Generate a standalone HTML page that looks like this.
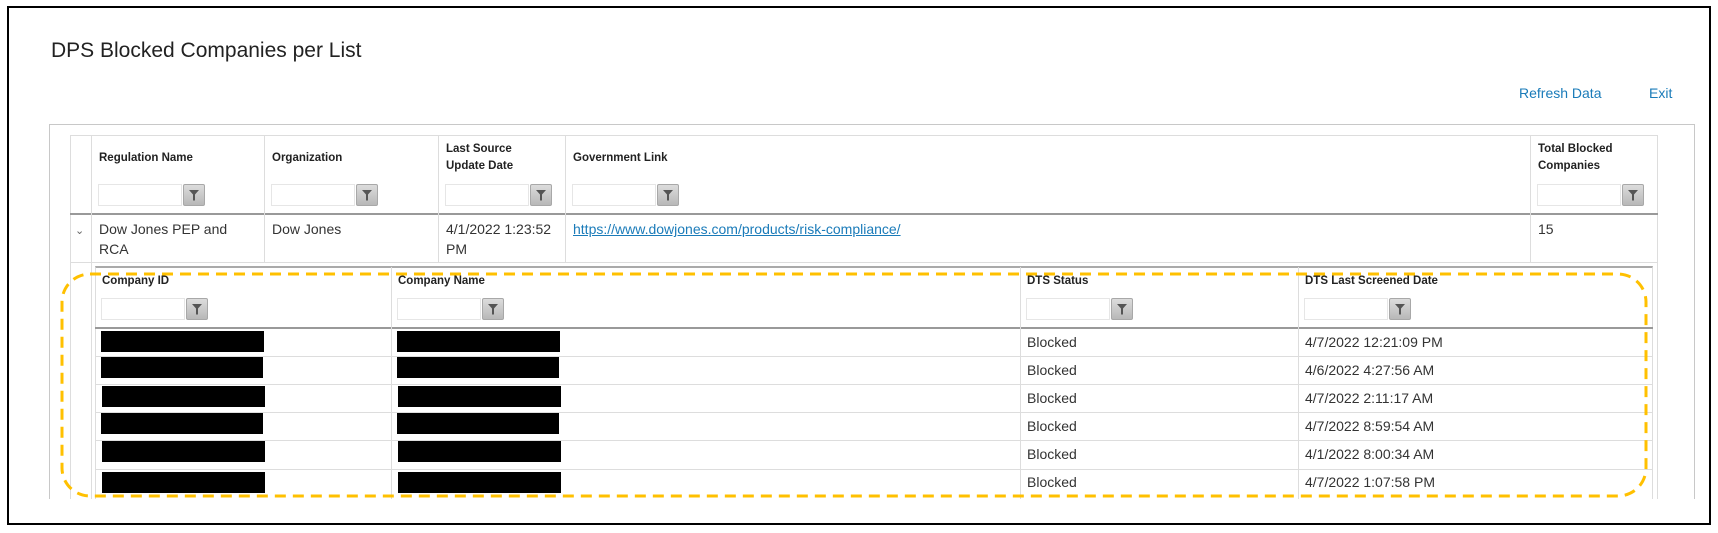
<!DOCTYPE html>
<html><head><meta charset="utf-8"><style>
*{box-sizing:border-box;margin:0;padding:0}
body{width:1718px;height:533px;background:#fff;font-family:"Liberation Sans",Arial,sans-serif;position:relative;overflow:hidden;color:#333}
.a{position:absolute}
.frame{left:7px;top:6px;width:1704px;height:519px;border:2px solid #000}
.title{left:51px;top:39px;font-size:21px;color:#222}
.lnk{color:#1a7bb9;font-size:14px}
.panel{left:49px;top:124px;width:1646px;height:375px;border:1px solid #c8c8c8;border-bottom:none}
.hd{font-weight:bold;font-size:11.5px;color:#222;line-height:17px}
.vl{width:1px;background:#ddd}
.hl{height:1px;background:#ddd}
.f{width:106px;height:22px}
.f .i{position:absolute;left:0;top:0;width:84px;height:22px;border:1px solid #e6e6e6;background:#fff}
.f .b{position:absolute;left:85px;top:0;width:22px;height:22px;border:1px solid #a8a8a8;border-radius:2px;background:linear-gradient(#dcdcdc,#b8b8b8)}
.t{font-size:14px;color:#333;line-height:20px}
.blk{background:#000;height:21px}
</style></head><body>
<div class="a frame"></div>
<div class="a title">DPS Blocked Companies per List</div>
<div class="a lnk" style="left:1519px;top:85px">Refresh Data</div>
<div class="a lnk" style="left:1649px;top:85px">Exit</div>
<div class="a panel"></div>

<!-- main grid -->
<div class="a" style="left:70px;top:135px;width:1588px;height:364px;border:1px solid #ddd;border-bottom:none"></div>
<div class="a" style="left:70px;top:213px;width:1588px;height:2px;background:#999"></div>
<div class="a hl" style="left:70px;top:262px;width:1588px"></div>
<div class="a vl" style="left:91px;top:135px;height:127px"></div>
<div class="a vl" style="left:264px;top:135px;height:127px"></div>
<div class="a vl" style="left:438px;top:135px;height:127px"></div>
<div class="a vl" style="left:565px;top:135px;height:127px"></div>
<div class="a vl" style="left:1530px;top:135px;height:127px"></div>
<div class="a vl" style="left:91px;top:262px;height:237px"></div>

<div class="a hd" style="left:99px;top:150px">Regulation Name</div>
<div class="a hd" style="left:272px;top:150px">Organization</div>
<div class="a hd" style="left:446px;top:141px">Last Source<br>Update Date</div>
<div class="a hd" style="left:573px;top:150px">Government Link</div>
<div class="a hd" style="left:1538px;top:141px">Total Blocked<br>Companies</div>

<div class="a f" style="left:98px;top:184px"><div class="i"></div><div class="b"><svg width="20" height="20" viewBox="0 0 20 20"><path d="M5 5h10l-4 4.5v6h-2v-6z" fill="#555"/></svg></div></div>
<div class="a f" style="left:271px;top:184px"><div class="i"></div><div class="b"><svg width="20" height="20" viewBox="0 0 20 20"><path d="M5 5h10l-4 4.5v6h-2v-6z" fill="#555"/></svg></div></div>
<div class="a f" style="left:445px;top:184px"><div class="i"></div><div class="b"><svg width="20" height="20" viewBox="0 0 20 20"><path d="M5 5h10l-4 4.5v6h-2v-6z" fill="#555"/></svg></div></div>
<div class="a f" style="left:572px;top:184px"><div class="i"></div><div class="b"><svg width="20" height="20" viewBox="0 0 20 20"><path d="M5 5h10l-4 4.5v6h-2v-6z" fill="#555"/></svg></div></div>
<div class="a f" style="left:1537px;top:184px"><div class="i"></div><div class="b"><svg width="20" height="20" viewBox="0 0 20 20"><path d="M5 5h10l-4 4.5v6h-2v-6z" fill="#555"/></svg></div></div>

<div class="a" style="left:75px;top:224px;font-size:11px;color:#666">&#8964;</div>
<div class="a t" style="left:99px;top:219px">Dow Jones PEP and<br>RCA</div>
<div class="a t" style="left:272px;top:219px">Dow Jones</div>
<div class="a t" style="left:446px;top:219px">4/1/2022 1:23:52<br>PM</div>
<div class="a t" style="left:573px;top:219px;color:#1a7bb9;text-decoration:underline">https://www.dowjones.com/products/risk-compliance/</div>
<div class="a t" style="left:1538px;top:219px">15</div>

<!-- detail grid -->
<div class="a" style="left:95px;top:266px;width:1558px;height:233px;border:1px solid #ddd;border-top:2px solid #aaa;border-bottom:none"></div>
<div class="a" style="left:95px;top:327px;width:1558px;height:2px;background:#999"></div>
<div class="a vl" style="left:391px;top:267px;height:232px"></div>
<div class="a vl" style="left:1020px;top:267px;height:232px"></div>
<div class="a vl" style="left:1298px;top:267px;height:232px"></div>
<div class="a hl" style="left:95px;top:356px;width:1558px"></div>
<div class="a hl" style="left:95px;top:384px;width:1558px"></div>
<div class="a hl" style="left:95px;top:412px;width:1558px"></div>
<div class="a hl" style="left:95px;top:440px;width:1558px"></div>
<div class="a hl" style="left:95px;top:469px;width:1558px"></div>

<div class="a hd" style="left:102px;top:273px">Company ID</div>
<div class="a hd" style="left:398px;top:273px">Company Name</div>
<div class="a hd" style="left:1027px;top:273px">DTS Status</div>
<div class="a hd" style="left:1305px;top:273px">DTS Last Screened Date</div>

<div class="a f" style="left:101px;top:298px"><div class="i"></div><div class="b"><svg width="20" height="20" viewBox="0 0 20 20"><path d="M5 5h10l-4 4.5v6h-2v-6z" fill="#555"/></svg></div></div>
<div class="a f" style="left:397px;top:298px"><div class="i"></div><div class="b"><svg width="20" height="20" viewBox="0 0 20 20"><path d="M5 5h10l-4 4.5v6h-2v-6z" fill="#555"/></svg></div></div>
<div class="a f" style="left:1026px;top:298px"><div class="i"></div><div class="b"><svg width="20" height="20" viewBox="0 0 20 20"><path d="M5 5h10l-4 4.5v6h-2v-6z" fill="#555"/></svg></div></div>
<div class="a f" style="left:1304px;top:298px"><div class="i"></div><div class="b"><svg width="20" height="20" viewBox="0 0 20 20"><path d="M5 5h10l-4 4.5v6h-2v-6z" fill="#555"/></svg></div></div>

<div class="a blk" style="left:101px;top:331px;width:163px"></div><div class="a blk" style="left:397px;top:331px;width:163px"></div>
<div class="a blk" style="left:101px;top:357px;width:162px"></div><div class="a blk" style="left:397px;top:357px;width:162px"></div>
<div class="a blk" style="left:102px;top:386px;width:163px"></div><div class="a blk" style="left:398px;top:386px;width:163px"></div>
<div class="a blk" style="left:101px;top:413px;width:162px"></div><div class="a blk" style="left:397px;top:413px;width:162px"></div>
<div class="a blk" style="left:102px;top:441px;width:163px"></div><div class="a blk" style="left:398px;top:441px;width:163px"></div>
<div class="a blk" style="left:102px;top:472px;width:163px"></div><div class="a blk" style="left:398px;top:472px;width:163px"></div>

<div class="a t" style="left:1027px;top:332px">Blocked</div><div class="a t" style="left:1305px;top:332px">4/7/2022 12:21:09 PM</div>
<div class="a t" style="left:1027px;top:360px">Blocked</div><div class="a t" style="left:1305px;top:360px">4/6/2022 4:27:56 AM</div>
<div class="a t" style="left:1027px;top:388px">Blocked</div><div class="a t" style="left:1305px;top:388px">4/7/2022 2:11:17 AM</div>
<div class="a t" style="left:1027px;top:416px">Blocked</div><div class="a t" style="left:1305px;top:416px">4/7/2022 8:59:54 AM</div>
<div class="a t" style="left:1027px;top:444px">Blocked</div><div class="a t" style="left:1305px;top:444px">4/1/2022 8:00:34 AM</div>
<div class="a t" style="left:1027px;top:472px">Blocked</div><div class="a t" style="left:1305px;top:472px">4/7/2022 1:07:58 PM</div>

<svg class="a" style="left:0;top:0" width="1718" height="533"><rect x="62" y="274" width="1584" height="222" rx="28" ry="28" fill="none" stroke="#FFC000" stroke-width="3" stroke-dasharray="11 7"/></svg>
</body></html>
